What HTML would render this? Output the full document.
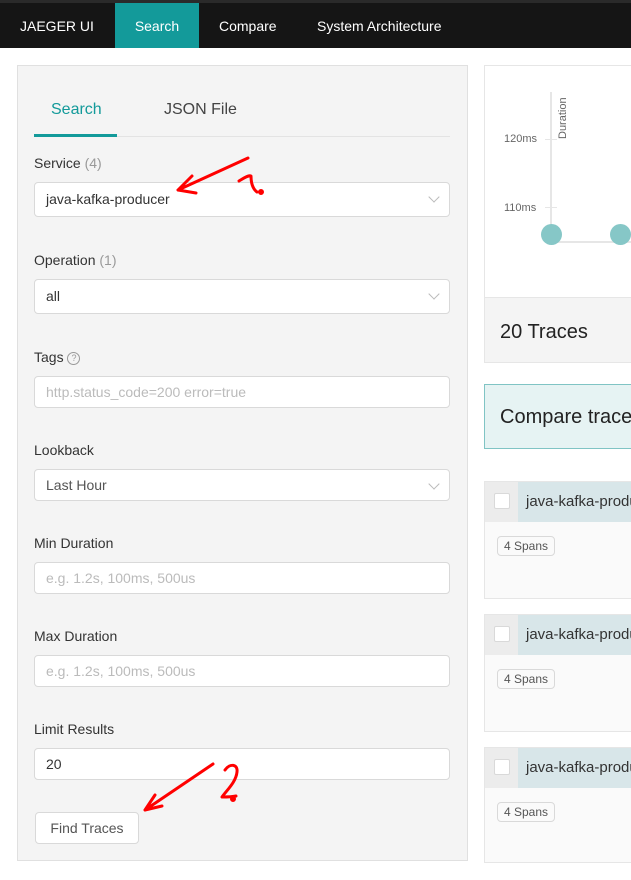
<!DOCTYPE html>
<html><head><style>
*{box-sizing:border-box;margin:0;padding:0}
body{width:631px;height:880px;overflow:hidden;background:#fff;font-family:"Liberation Sans",Arial,sans-serif;position:relative;color:#333}
.a{position:absolute}
.top{left:0;top:0;width:631px;height:48px;background:#151515;border-top:3px solid #2a2a2a}
.nav{top:4px;height:45px;line-height:45px;color:#fff;font-size:14px}
.lbl{left:34px;font-size:14px;color:#333}
.lbl span{color:#999}
.in{left:34px;width:416px;height:32px;background:#fff;border:1px solid #d9d9d9;border-radius:4px;font-size:14px;line-height:30px;padding-left:11px;color:#333}
.ph{color:#bbb}
.chev{position:absolute;right:11px;top:10px;width:8px;height:8px;border-right:1px solid #bbb;border-bottom:1px solid #bbb;transform:rotate(45deg)}
.card{left:484px;width:160px;border:1px solid #e6e6e6;background:#fafafa;overflow:hidden}
.card .h{height:40px;background:#ececec;position:relative}
.card .h .t{position:absolute;left:33px;top:0;width:200px;height:40px;background:#d8e6e9;font-size:15px;line-height:40px;padding-left:8px;color:#333;white-space:nowrap}
.card .cb{position:absolute;left:9px;top:11px;width:16px;height:16px;background:#fff;border:1px solid #d9d9d9;border-radius:2px}
.sp{position:absolute;left:12px;top:54px;font-size:12px;border:1px solid #d9d9d9;border-radius:4px;padding:2px 6px;background:#fafafa;color:#555}
</style></head><body>
<div class="a top"></div>
<div class="a nav" style="left:20px">JAEGER UI</div>
<div class="a nav" style="left:115px;top:3px;width:84px;background:#139a9a;text-align:center;line-height:47px">Search</div>
<div class="a nav" style="left:219px">Compare</div>
<div class="a nav" style="left:317px">System Architecture</div>

<div class="a" style="left:17px;top:65px;width:451px;height:796px;background:#f4f4f4;border:1px solid #e0e0e0"></div>
<div class="a" style="left:51px;top:101px;font-size:16px;color:#139a9a">Search</div>
<div class="a" style="left:164px;top:101px;font-size:16px;color:#444">JSON File</div>
<div class="a" style="left:34px;top:136px;width:416px;height:1px;background:#e3e3e3"></div>
<div class="a" style="left:34px;top:134px;width:83px;height:3px;background:#139a9a"></div>

<div class="a lbl" style="top:155px">Service <span>(4)</span></div>
<div class="a in" style="top:182px;height:35px;line-height:33px">java-kafka-producer<div class="chev"></div></div>
<div class="a lbl" style="top:252px">Operation <span>(1)</span></div>
<div class="a in" style="top:279px;height:35px;line-height:33px">all<div class="chev"></div></div>
<div class="a lbl" style="top:349px">Tags <span style="display:inline-block;width:13px;height:13px;border:1px solid #999;border-radius:50%;font-size:9px;text-align:center;line-height:11px;vertical-align:1px">?</span></div>
<div class="a in ph" style="top:376px">http.status_code=200 error=true</div>
<div class="a lbl" style="top:442px">Lookback</div>
<div class="a in" style="top:469px;color:#555">Last Hour<div class="chev"></div></div>
<div class="a lbl" style="top:535px">Min Duration</div>
<div class="a in ph" style="top:562px">e.g. 1.2s, 100ms, 500us</div>
<div class="a lbl" style="top:628px">Max Duration</div>
<div class="a in ph" style="top:655px">e.g. 1.2s, 100ms, 500us</div>
<div class="a lbl" style="top:721px">Limit Results</div>
<div class="a in" style="top:748px">20</div>
<div class="a" style="left:35px;top:812px;width:104px;height:32px;background:#fff;border:1px solid #d9d9d9;border-radius:4px;font-size:14px;line-height:30px;text-align:center;color:#555">Find Traces</div>

<div class="a" style="left:484px;top:65px;width:160px;height:298px;border:1px solid #e6e6e6;background:#fff"></div>
<div class="a" style="left:485px;top:297px;width:150px;height:65px;background:#f4f4f4;border-top:1px solid #e6e6e6"></div>
<div class="a" style="left:500px;top:321px;font-size:20px;color:#222">20 Traces</div>
<div class="a" style="left:550px;top:92px;width:2px;height:150px;background:#e6e6e6"></div>
<div class="a" style="left:550px;top:241px;width:90px;height:2px;background:#e6e6e6"></div>
<div class="a" style="left:545px;top:139px;width:12px;height:1px;background:#e6e6e6"></div>
<div class="a" style="left:545px;top:207px;width:12px;height:1px;background:#e6e6e6"></div>
<div class="a" style="left:504px;top:133px;font-size:11px;color:#666">120ms</div>
<div class="a" style="left:504px;top:202px;font-size:11px;color:#666">110ms</div>
<div class="a" style="left:557px;top:139px;font-size:11px;color:#666;transform:rotate(-90deg);transform-origin:0 0">Duration</div>
<div class="a" style="left:541px;top:224px;width:21px;height:21px;border-radius:50%;background:#86c7c7"></div>
<div class="a" style="left:610px;top:224px;width:21px;height:21px;border-radius:50%;background:#86c7c7"></div>

<div class="a" style="left:484px;top:384px;width:160px;height:65px;background:#e6f3f3;border:1px solid #80c4c4"></div>
<div class="a" style="left:500px;top:406px;font-size:20px;color:#222;white-space:nowrap">Compare traces</div>

<div class="a card" style="top:481px;height:118px"><div class="h"><div class="cb"></div><div class="t">java-kafka-producer</div></div><div class="sp">4 Spans</div></div>
<div class="a card" style="top:614px;height:118px"><div class="h"><div class="cb"></div><div class="t">java-kafka-producer</div></div><div class="sp">4 Spans</div></div>
<div class="a card" style="top:747px;height:116px"><div class="h"><div class="cb"></div><div class="t">java-kafka-producer</div></div><div class="sp">4 Spans</div></div>

<svg class="a" style="left:0;top:0" width="631" height="880" fill="none" stroke="#f00" stroke-width="3" stroke-linecap="round" stroke-linejoin="round">
<path d="M248 158 L178 190 M178 190 L192 176 M178 190 L196 193"/>
<path d="M239 181 C244 178 248 175 251 176 C251 183 253 189 257 192"/>
<circle cx="261" cy="192" r="1.5" fill="#f00"/>
<path d="M213 764 L145 810 M145 810 L155 795 M145 810 L162 806"/>
<path d="M225 770 C230 763 238 764 237 772 C236 782 227 790 222 797 C227 797 232 797 236 796"/>
<circle cx="233" cy="799" r="1.5" fill="#f00"/>
</svg>
</body></html>
